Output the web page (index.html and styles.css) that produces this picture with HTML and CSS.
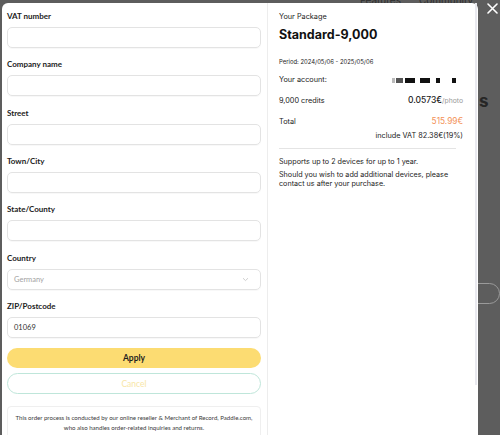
FILE: index.html
```html
<!DOCTYPE html>
<html>
<head>
<meta charset="utf-8">
<link rel="stylesheet" href="styles.css">
</head>
<body>
<div class="bg-nav"><span>Features</span><span>Community</span></div>
<div class="bg-heading">s</div>
<div class="bg-button"></div>
<div class="close"><svg width="11" height="11" viewBox="0 0 11 11"><path d="M1 1L10 10M10 1L1 10" stroke="#fff" stroke-width="1.6" stroke-linecap="round"/></svg></div>

<div class="modal">
  <div class="form-col">
    <div class="field"><label class="label">VAT number</label><div class="input"></div></div>
    <div class="field"><label class="label">Company name</label><div class="input"></div></div>
    <div class="field"><label class="label">Street</label><div class="input"></div></div>
    <div class="field"><label class="label">Town/City</label><div class="input"></div></div>
    <div class="field"><label class="label">State/County</label><div class="input"></div></div>
    <div class="field"><label class="label">Country</label>
      <div class="input select"><span class="placeholder">Germany</span>
        <svg width="7" height="5" viewBox="0 0 7 5"><path d="M1 1.2L3.5 3.6L6 1.2" fill="none" stroke="#c8c8c8" stroke-width="0.9"/></svg>
      </div>
    </div>
    <div class="field"><label class="label">ZIP/Postcode</label><div class="input"><span class="value">01069</span></div></div>
    <div class="btn apply">Apply</div>
    <div class="btn cancel">Cancel</div>
    <div class="notice">This order process is conducted by our online reseller &amp; Merchant of Record, Paddle.com,<br>who also handles order-related inquiries and returns.</div>
  </div>
  <div class="summary-col">
    <div class="pkg-label">Your Package</div>
    <div class="pkg-name">Standard-9,000</div>
    <div class="period">Period: 2024/05/06 - 2025/05/06</div>
    <div class="row first"><span>Your account:</span>
      <span class="mask"><i class="m1"></i><i class="m2"></i><i class="m3"></i><i class="m4"></i><i class="m5"></i><i class="m6"></i></span>
    </div>
    <div class="row"><span>9,000 credits</span><span><b class="unit">0.0573€</b><span class="per">/photo</span></span></div>
    <div class="row"><span>Total</span><span class="total">515.99€</span></div>
    <div class="vat">include VAT 82.38€(19%)</div>
    <div class="divider"></div>
    <p class="note">Supports up to 2 devices for up to 1 year.</p>
    <p class="note">Should you wish to add additional devices, please<br>contact us after your purchase.</p>
  </div>
  <div class="scrollbar"></div>
</div>
</body>
</html>
```
FILE: styles.css
```css
html, body {
  margin: 0;
  padding: 0;
}
body {
  width: 500px;
  height: 435px;
  overflow: hidden;
  background: #5d5d5d;
  position: relative;
  font-family: "Lato", "Noto Sans", sans-serif;
}
.bg-nav {
  position: absolute;
  top: -6px;
  left: 360px;
  display: flex;
  gap: 18px;
  font-family: "Inter", sans-serif;
  font-size: 10px;
  line-height: 12px;
  color: #2e2e2e;
}
.bg-heading {
  position: absolute;
  left: 479px;
  top: 91px;
  font-family: "Inter", sans-serif;
  font-weight: 700;
  font-size: 17px;
  color: #262626;
}
.bg-button {
  position: absolute;
  left: 440px;
  top: 283px;
  width: 58px;
  height: 19px;
  border: 1px solid #9a9a9a;
  border-radius: 11px;
}
.close {
  position: absolute;
  left: 487px;
  top: 3px;
  width: 11px;
  height: 11px;
  display: flex;
}
.modal {
  position: relative;
  margin: 3px 0 0 2px;
  width: 476px;
  height: 445px;
  background: #fff;
  border-radius: 6px 6px 0 0;
  display: grid;
  grid-template-columns: 266px 210px;
}
.form-col {
  box-sizing: border-box;
  padding: 7px 6px 0 5px;
  border-right: 1px solid #ededed;
}
.field {
  margin-bottom: 10.33px;
}
.label {
  display: block;
  font-weight: 700;
  font-size: 8px;
  line-height: 12px;
  color: #222;
  margin-bottom: 5px;
}
.input {
  box-sizing: border-box;
  height: 21px;
  border: 1px solid #e3e3e3;
  border-radius: 5px;
  display: flex;
  align-items: center;
  justify-content: space-between;
  padding: 0 11px 0 6px;
  box-shadow: 0 1px 1px rgba(0,0,0,0.03);
}
.placeholder {
  font-size: 7.5px;
  color: #a3a3a3;
}
.value {
  font-size: 7.5px;
  color: #333;
}
.btn {
  box-sizing: border-box;
  height: 21px;
  border-radius: 11px;
  display: flex;
  align-items: center;
  justify-content: center;
  font-size: 8.5px;
}
.apply {
  margin-top: 1px;
  height: 20px;
  background: #fcdc72;
  font-weight: 700;
  color: #1e1e1e;
}
.cancel {
  margin-top: 5px;
  border: 1px solid #bfe6da;
  color: #f8e6a6;
}
.notice {
  margin-top: 12px;
  border: 1px solid #efefef;
  border-radius: 4px;
  padding: 6px 0 8px;
  text-align: center;
  font-size: 6.1px;
  line-height: 10px;
  color: #3a3a3a;
}
.summary-col {
  padding: 9px 15px 0 11px;
  font-family: "Inter", "Liberation Sans", sans-serif;
  color: #222;
}
.pkg-label {
  font-size: 7.3px;
  line-height: 10px;
}
.pkg-name {
  margin-top: 5px;
  font-size: 12.5px;
  font-weight: 700;
  line-height: 16px;
  color: #111;
}
.period {
  margin-top: 15px;
  font-size: 5.9px;
  line-height: 8px;
}
.row {
  display: flex;
  justify-content: space-between;
  align-items: baseline;
  margin-top: 10px;
  font-size: 7.3px;
  line-height: 10px;
}
.row.first {
  margin-top: 9px;
  align-items: center;
}
.mask {
  display: flex;
  align-items: center;
  height: 6px;
  margin-right: 7px;
}
.mask i {
  display: block;
  height: 5px;
  background: #111;
}
.mask .m1 { width: 3px; background: #bbb; }
.mask .m2 { width: 7px; background: #555; margin-left: 1px; }
.mask .m3 { width: 10px; margin-left: 2px; }
.mask .m4 { width: 10px; margin-left: 5px; }
.mask .m5 { width: 4px; margin-left: 6px; }
.mask .m6 { width: 4px; margin-left: 12px; }
.unit {
  font-size: 8.5px;
  font-weight: 500;
  color: #1a1a1a;
}
.per {
  font-size: 6.8px;
  color: #999;
}
.total {
  font-size: 8.3px;
  color: #f39156;
}
.vat {
  margin-top: 4px;
  text-align: right;
  font-size: 7.3px;
  line-height: 10px;
}
.divider {
  margin: 7px 7px 0 0;
  height: 1px;
  background: #e4e4e4;
}
.note {
  margin: 8px 0 0;
  font-size: 7.2px;
  line-height: 9.5px;
}
.note + .note {
  margin-top: 3px;
}
.scrollbar {
  position: absolute;
  right: 1px;
  top: 0;
  width: 2px;
  height: 382px;
  background: #e9e9ef;
}
```
